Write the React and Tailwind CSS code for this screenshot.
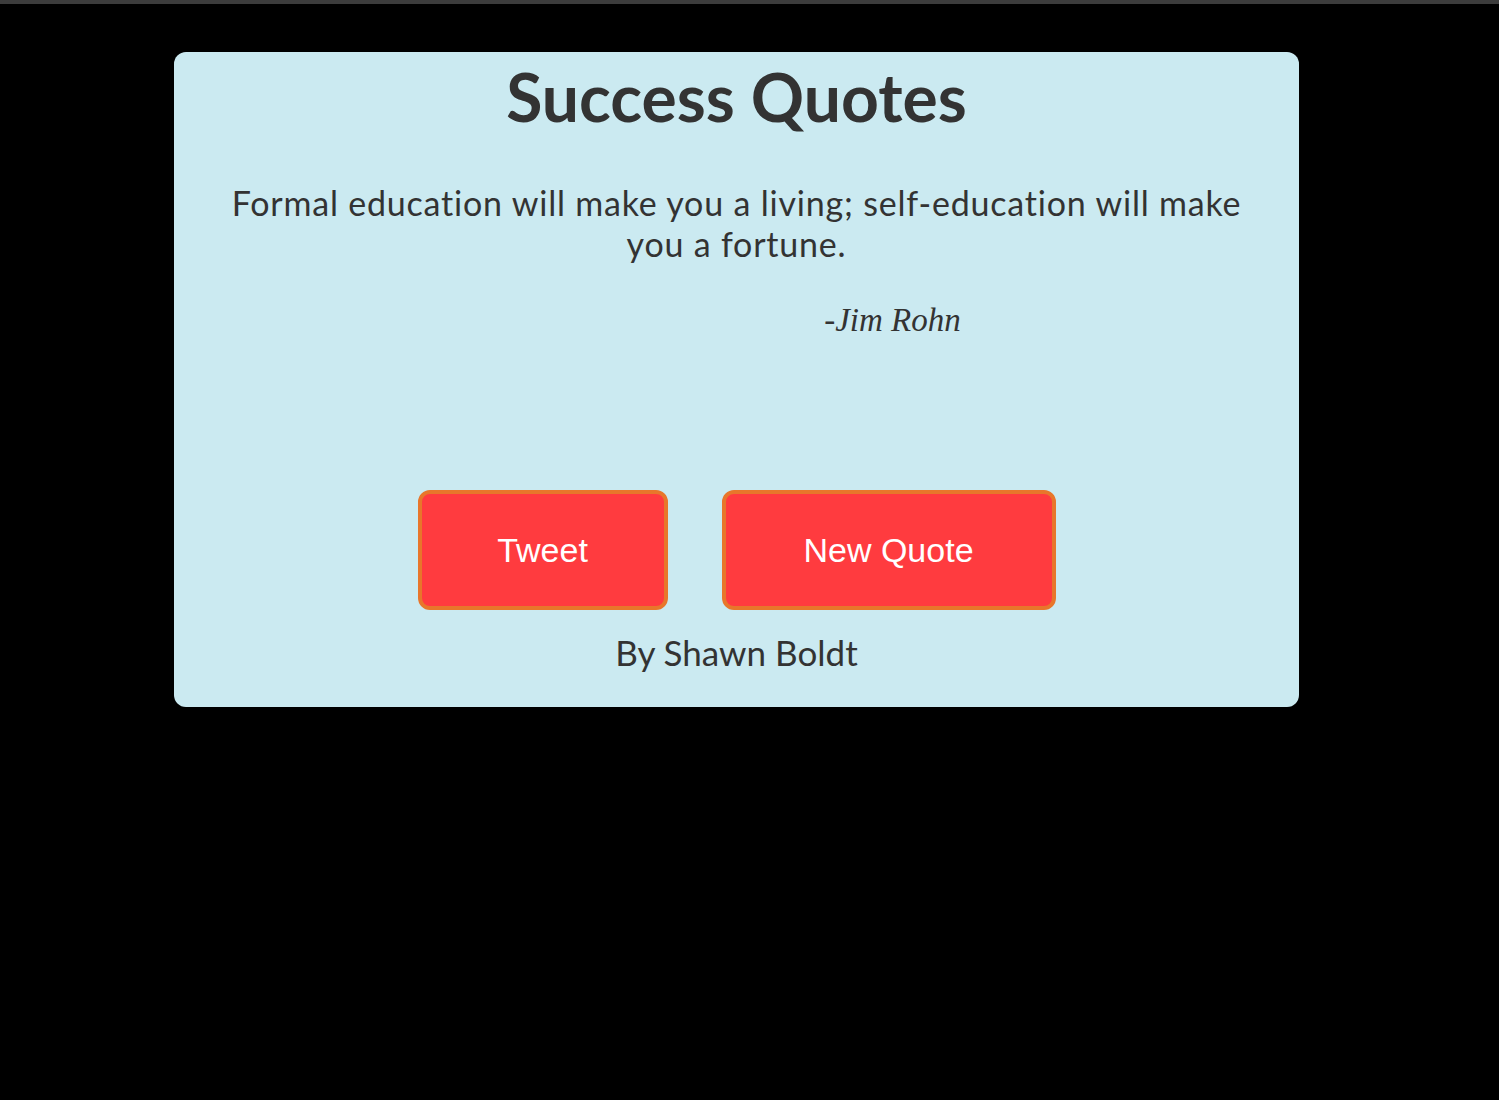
export default function App() {
  return (
    <div className="min-h-screen bg-black">
      <div className="h-[4px] bg-[#3c3c3c]" />
      <div className="pt-[48px] pl-[174px]">
        <div className="w-[1125px] h-[655px] rounded-[12px] bg-[#cbeaf1] flex flex-col items-center text-[#333333] font-['Lato',sans-serif]">
          <h1 className="mt-[12px] text-[66px] leading-[66px] font-bold">Success Quotes</h1>

          <p className="mt-[52px] w-[1030px] text-center text-[34px] leading-[41px] tracking-[0.8px]">
            Formal education will make you a living; self-education will make you a fortune.
          </p>

          <div className="mt-[36px] w-full pl-[312px] text-center font-['Liberation_Serif',serif] italic text-[33px] leading-[40px]">
            -Jim Rohn
          </div>

          <div className="mt-[150px] flex gap-[54px] font-['Liberation_Sans',Arial,sans-serif]">
            <button className="w-[250px] h-[120px] rounded-[12px] border-4 border-[#e8762b] bg-[#ff3b3f] text-white text-[34px]">
              Tweet
            </button>
            <button className="w-[334px] h-[120px] rounded-[12px] border-4 border-[#e8762b] bg-[#ff3b3f] text-white text-[34px]">
              New Quote
            </button>
          </div>

          <div className="mt-[22px] text-[35px] leading-[40px]">By Shawn Boldt</div>
        </div>
      </div>
    </div>
  )
}
